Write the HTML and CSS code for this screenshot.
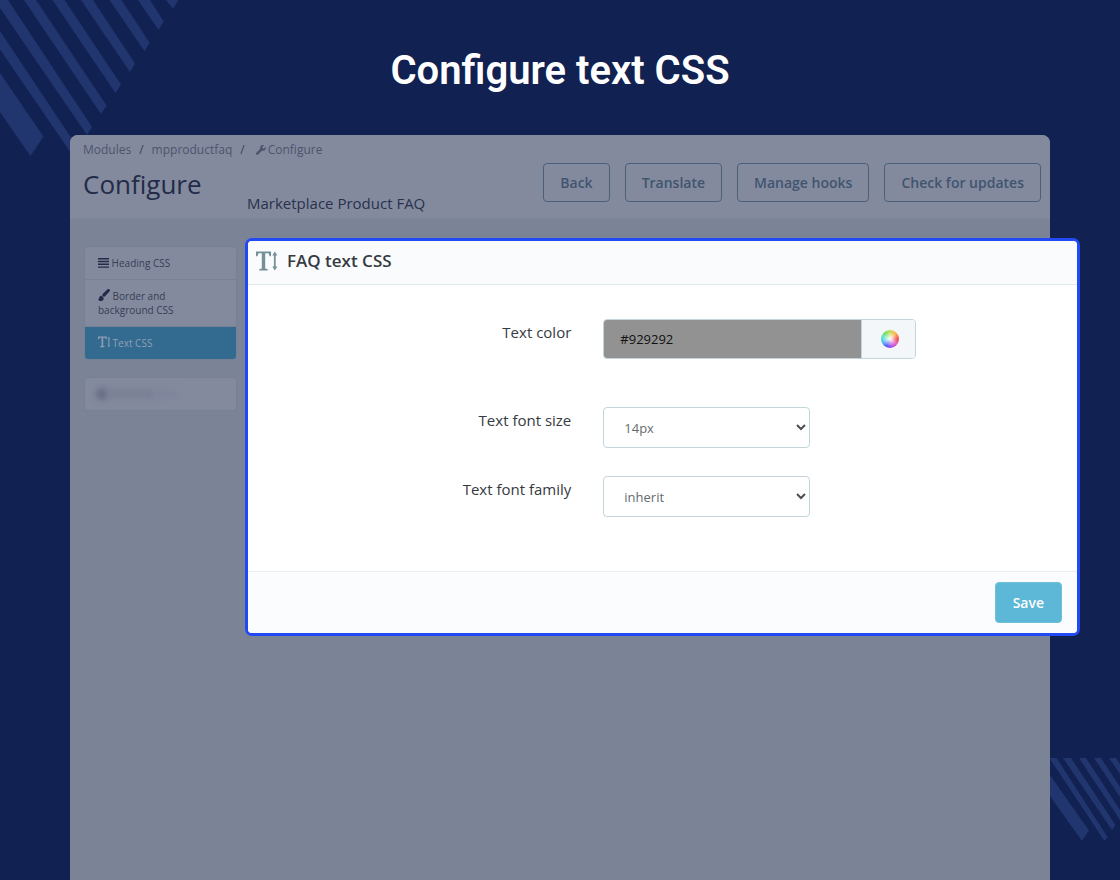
FILE: index.html
```
<!DOCTYPE html>
<html lang="en">
<head>
    <meta charset="UTF-8">
    <meta name="viewport" content="width=device-width, initial-scale=1.0">
    <title>Configure text CSS</title>
    <link rel="stylesheet" href="styles.css">
</head>
<body>
    <svg class="stripes stripes-top" width="180" height="160" viewBox="0 0 180 160" aria-hidden="true">
        <path d="M0 73L43.5 136.5L30.5 156L0 112Z"/>
        <path d="M0 31L78 148L73 156L0 49.500Z"/>
        <path d="M0 0H8L92 127L87 135L0 8Z"/>
        <path d="M24 0H36L106.500 105.500L101 114Z"/>
        <path d="M52.500 0H64.500L121 84.500L115.500 93Z"/>
        <path d="M81 0H93L135 63.500L130 72Z"/>
        <path d="M109.500 0H121.500L149.500 42.500L144.500 51Z"/>
        <path d="M138 0H150L163.700 21.500L158.500 30Z"/>
        <path d="M166 0H178.500L173 9Z"/>
    </svg>
    <svg class="stripes stripes-bottom" width="70" height="84" viewBox="0 0 70 84" aria-hidden="true">
        <path d="M0 17L39 72.500L32 83L0 38Z"/>
        <path d="M0 0H6.500L57.500 79L54.500 83L0 1Z"/>
        <path d="M13 0H21L65.500 67L62 72Z"/>
        <path d="M29 0H36L70 52V62Z"/>
        <path d="M44 0H51L70 29V39Z"/>
        <path d="M59 0H66L70 6V16Z"/>
    </svg>

    <h1 class="title">Configure text CSS</h1>

    <div class="window">
        <header class="head">
            <nav class="breadcrumb">
                <a href="#">Modules</a>
                <span>/</span>
                <a href="#">mpproductfaq</a>
                <span>/</span>
                <a href="#"><svg width="10" height="10" viewBox="0 0 512 512"><path d="M507 116c-3-12-18-16-27-7l-74 74-68-11-11-68 74-74c9-9 5-24-8-27-50-12-105 1-144 40-42 42-53 102-36 155L19 393a64 64 0 0 0 0 91c25 25 66 25 91 0l194-194c53 18 113 6 156-36 39-39 52-94 47-138z"/></svg>Configure</a>
            </nav>
            <div class="head-row">
                <h2 class="page-name">Configure</h2>
                <p class="module-name">Marketplace Product FAQ</p>
                <div class="actions">
                    <button class="btn">Back</button>
                    <button class="btn">Translate</button>
                    <button class="btn">Manage hooks</button>
                    <button class="btn">Check for updates</button>
                </div>
            </div>
        </header>

        <div class="content">
            <aside class="sidebar">
                <nav class="menu">
                    <a class="menu-item" href="#"><svg width="11" height="10" viewBox="0 0 11 10"><path d="M0 0h11v1.400H0zM0 2.800h11v1.400H0zM0 5.600h11V7H0zM0 8.400h11v1.400H0z"/></svg> Heading CSS</a>
                    <a class="menu-item" href="#"><svg width="12" height="12" viewBox="0 0 12 12"><path d="M11.600.4C11-.2 9.900-.1 9.200.5L4.900 4.700 4.100 6.300 5.900 8 7.400 7.100 11.600 2.300C12.100 1.700 12.100.9 11.600.4zM3.600 6.800C2 6.700 1.300 7.900 1.200 8.900 1 9.700.600 10 0 9.900c.5 1.500 1.700 2.200 3.200 2.100C5.200 11.900 6 10.200 5.500 8.600z"/></svg> Border and background CSS</a>
                    <a class="menu-item active" href="#"><svg width="12" height="12" viewBox="0 0 22 20"><path d="M0 0h16v5h-1.500L13 2H9.500v15.500L12 18v1.500H4V18l2.500-.5V2H3L1.500 5H0zM18 4l2-4 2 4h-1v12h1l-2 4-2-4h1V4z"/></svg> Text CSS</a>
                </nav>
                <div class="menu menu-hidden">
                    <span class="smudge dot"></span>
                    <span class="smudge line"></span>
                    <span class="smudge tail"></span>
                </div>
            </aside>

            <form class="panel">
                <h3 class="panel-head">
                    <svg width="22" height="20" viewBox="0 0 22 20"><path d="M0 .5h15v4.800h-1.300L12.500 2.200H9.200v15.300l2.500.7v1.300H3.300v-1.300l2.500-.7V2.200H2.500L1.300 5.300H0zM16.300 4.500l2.500-4 2.500 4h-1.600v11h1.600l-2.500 4-2.500-4h1.600v-11z"/></svg>
                    FAQ text CSS
                </h3>
                <div class="panel-body">
                    <div class="row row-color">
                        <label for="color">Text color</label>
                        <div class="color-group">
                            <input class="color-input" id="color" type="text" value="#929292">
                            <button class="color-btn" type="button" aria-label="Pick a color"><span class="wheel"></span></button>
                        </div>
                    </div>
                    <div class="row">
                        <label for="size">Text font size</label>
                        <select id="size">
                            <option>14px</option>
                        </select>
                    </div>
                    <div class="row">
                        <label for="family">Text font family</label>
                        <select id="family">
                            <option>inherit</option>
                        </select>
                    </div>
                </div>
                <div class="panel-foot">
                    <button class="save" type="submit">Save</button>
                </div>
            </form>
        </div>
    </div>
</body>
</html>
```
FILE: styles.css
```
*{
    box-sizing: border-box;
}
body{
    margin:0;
    padding:0 70px;
    min-height:100vh;
    display: flex;
    flex-direction: column;
    position: relative;
    background-color: #112151;
    font-family: "Open Sans", sans-serif;
    color:#363a41;
}
a{
    color:inherit;
    text-decoration: none;
}
button,input,select{
    font-family: inherit;
}
svg{
    fill:currentColor;
}

/* background stripes */
.stripes{
    position: absolute;
    fill:#21366f;
}
.stripes-top{
    top:0;
    left:0;
}
.stripes-bottom{
    right:0;
    bottom:38px;
}

.title{
    margin:0;
    padding:47px 0 40px;
    font-family: Roboto, sans-serif;
    font-size: 40px;
    line-height: 48px;
    font-weight: 600;
    text-align: center;
    color:white;
}

/* dimmed window */
.window{
    flex:1;
    position: relative;
    background-color: #7b8397;
    border-radius: 8px 8px 0 0;
}
.head{
    padding:1px 9px 5px 13px;
    background-color: #848a9e;
    border-bottom: 1px solid #7f869a;
    border-radius: 8px 8px 0 0;
}
.breadcrumb{
    display: flex;
    gap:8px;
    font-size: 12px;
    line-height: 27px;
    color:#4b556d;
}
.breadcrumb span{
    color:#3a435c;
}
.breadcrumb svg{
    margin:0 2px 0 3px;
    vertical-align: -1px;
}
.head-row{
    display: flex;
    align-items: flex-start;
}
.page-name{
    margin:0;
    width:164px;
    font-size: 26px;
    line-height: 43px;
    font-weight: 400;
    color:#222c48;
}
.module-name{
    margin:30px 0 0;
    font-size: 15px;
    line-height: 20px;
    color:#28324c;
}
.actions{
    display: flex;
    gap:15px;
    margin-left: auto;
}
.btn{
    height:39px;
    padding:0 16px;
    border:1px solid #4b6079;
    border-radius: 4px;
    background-color: transparent;
    font-size: 14px;
    font-weight: 600;
    color:#40546f;
}

.content{
    display: flex;
    align-items: flex-start;
    gap:8px;
    padding:19px 0 0 14px;
}
.sidebar{
    width:153px;
    padding-top: 8px;
}
.menu{
    border:1px solid #788095;
    border-radius: 4px;
    background-color: #848a9e;
    overflow: hidden;
}
.menu-item{
    display: block;
    padding:9px 13px;
    font-size: 10px;
    line-height: 14px;
    color:#343e57;
    border-bottom: 1px solid #788095;
}
.menu-item svg{
    vertical-align: -1px;
    color:#222c48;
}
.menu-item.active,.menu-item.active svg{
    color:#919eb2;
}
.menu-item.active{
    border-bottom: none;
    background-color: #336b90;
}
.menu-hidden{
    display: flex;
    align-items: center;
    height:34px;
    margin-top: 17px;
    padding-left: 11px;
}
.smudge{
    height:8px;
    background-color: #787f94;
    filter: blur(3px);
}
.dot{
    width:12px;
    height:12px;
    border-radius: 50%;
    background-color: #646c83;
}
.line{
    width:46px;
}
.tail{
    width:24px;
    background-color: #7e859a;
}

/* highlighted form */
.panel{
    flex:1;
    margin-right: -30px;
    border:3px solid #2349f5;
    border-radius: 7px;
    background-color: white;
    overflow: hidden;
}
.panel-head{
    display: flex;
    align-items: center;
    gap:9px;
    height:44px;
    margin:0;
    padding:0 8px 4px;
    border-bottom: 1px solid #dfe8ec;
    background-color: #fafbfc;
    font-size: 17px;
    font-weight: 600;
}
.panel-head svg{
    color:#748f98;
}
.panel-body{
    padding:34px 0 54px;
}
.row{
    display: grid;
    grid-template-columns: 39% 1fr;
    gap:32px;
    margin-bottom: 28px;
}
.row:last-child{
    margin-bottom: 0;
}
.row-color{
    margin-bottom: 48px;
}
.row label{
    font-size: 15px;
    line-height: 26px;
    text-align: right;
}
.color-group{
    display: flex;
    width:313px;
    height:40px;
    border:1px solid #c3d4da;
    border-radius: 4px;
    overflow: hidden;
}
.color-input{
    flex:1;
    min-width:0;
    padding:0 16px;
    border:none;
    background-color: #929292;
    font-size: 13px;
    color:#111;
}
.color-btn{
    display: flex;
    align-items: center;
    justify-content: center;
    width:54px;
    padding:0 0 0 2px;
    border:none;
    border-left: 1px solid #c3d4da;
    background-color: #f3f7f9;
}
.wheel{
    width:18px;
    height:18px;
    border-radius: 50%;
    background: radial-gradient(circle, white, rgba(255,255,255,0) 60%), conic-gradient(#c5dc50, #ffb04a 45deg, #ee4b57 90deg, #e85ab9 130deg, #a44ff0 170deg, #5658ee 205deg, #53b9f4 245deg, #5ee5c8 285deg, #70df62 325deg, #c5dc50);
}
select{
    appearance: none;
    width:207px;
    height:41px;
    padding:0 24px 0 20px;
    border:1px solid #c3d4da;
    border-radius: 4px;
    background: white url("data:image/svg+xml,%3Csvg xmlns='http://www.w3.org/2000/svg' width='10' height='7'%3E%3Cpath d='M1 1l4 4 4-4' fill='none' stroke='%234d4f52' stroke-width='2'/%3E%3C/svg%3E") no-repeat right 3px center;
    font-size: 13px;
    color:#666b70;
}
.panel-foot{
    display: flex;
    justify-content: flex-end;
    padding:10px 15px;
    border-top: 1px solid #e8edf0;
    background-color: #fbfcfe;
}
.save{
    height:41px;
    padding:0 17px;
    border:1px solid #6fc0d9;
    border-radius: 4px;
    background-color: #5cb8d6;
    font-size: 14px;
    font-weight: 600;
    color:white;
}
```
